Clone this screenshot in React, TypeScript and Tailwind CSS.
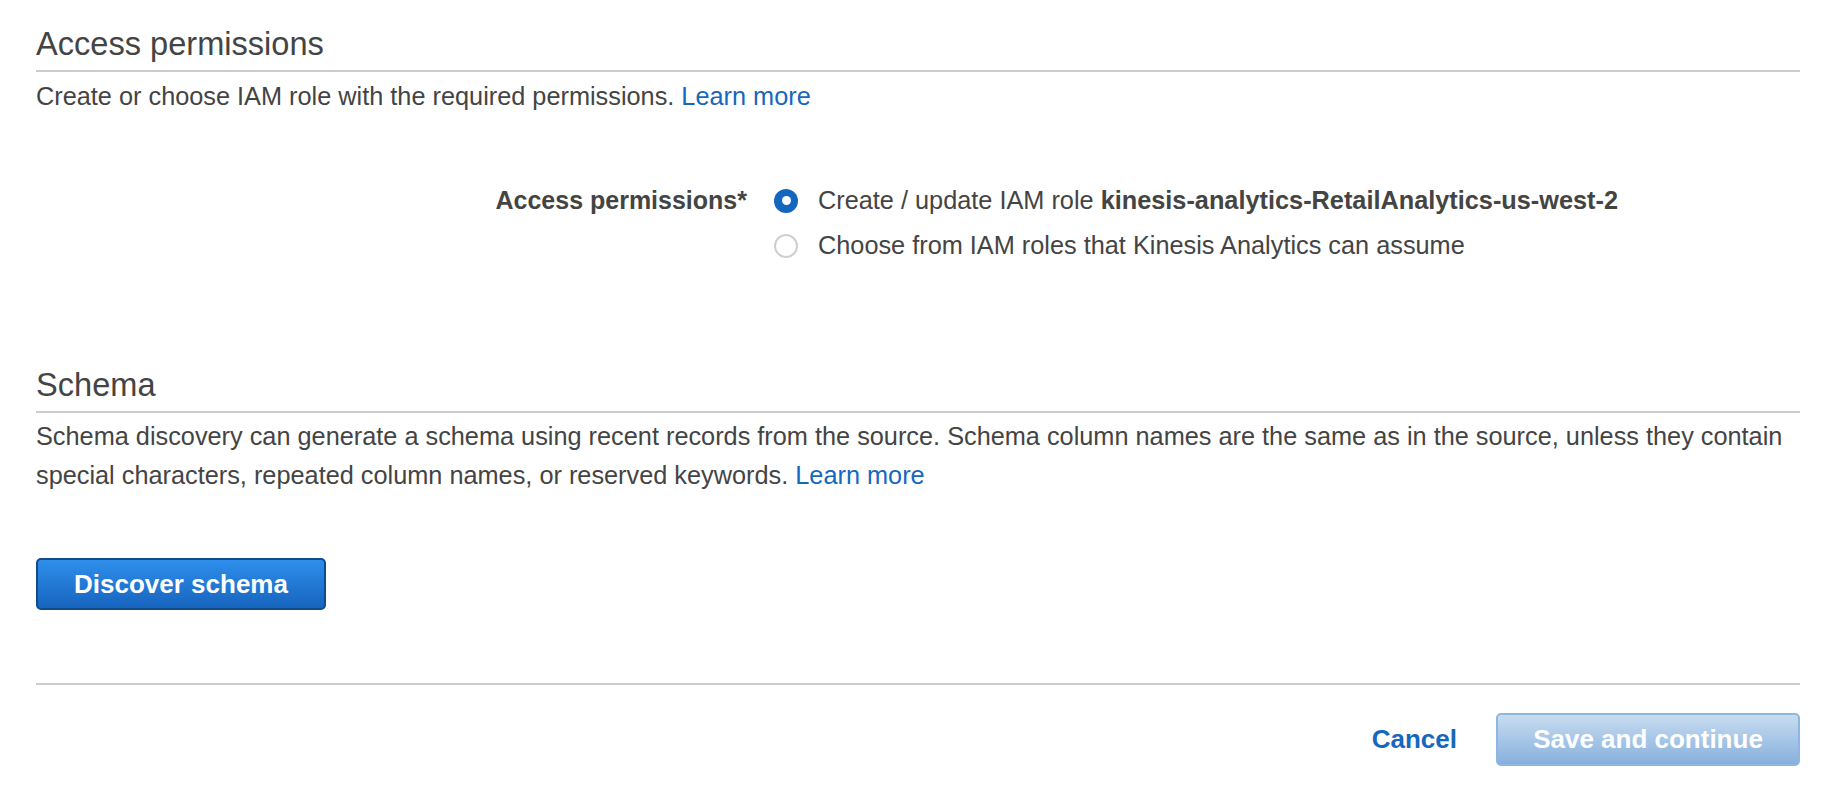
import React from "react";

function Radio({ checked }: { checked: boolean }) {
  return checked ? (
    <span className="flex h-[24px] w-[24px] shrink-0 items-center justify-center rounded-full bg-[#1466bf]">
      <span className="h-[9px] w-[9px] rounded-full bg-white" />
    </span>
  ) : (
    <span className="h-[24px] w-[24px] shrink-0 rounded-full border-2 border-[#cfcfcf] bg-white" />
  );
}

export default function App() {
  return (
    <div
      className="min-h-[788px] w-full bg-white pl-[36px] pr-[30px] text-[#444444]"
      style={{ fontFamily: '"Liberation Sans", Arial, Helvetica, sans-serif' }}
    >
      <section>
        <h2 className="border-b-2 border-[#cccccc] pt-[24px] pb-[6px] text-[32.6px] leading-[40px] font-normal text-[#444444]">
          Access permissions
        </h2>
        <p className="mt-[5px] text-[25.3px] leading-[39px]">
          Create or choose IAM role with the required permissions.{" "}
          <a className="text-[#1567c0]">Learn more</a>
        </p>
        <div className="mt-[62px] flex">
          <div className="w-[711px] shrink-0 pt-0 text-right text-[25px] font-bold leading-[45px]">
            Access permissions*
          </div>
          <div className="ml-[27px] flex flex-col text-[25.3px]">
            <label className="flex h-[45px] items-center gap-[20px]">
              <Radio checked />
              <span>
                Create / update IAM role{" "}
                <b className="font-bold">kinesis-analytics-RetailAnalytics-us-west-2</b>
              </span>
            </label>
            <label className="flex h-[45px] items-center gap-[20px]">
              <Radio checked={false} />
              <span>Choose from IAM roles that Kinesis Analytics can assume</span>
            </label>
          </div>
        </div>
      </section>

      <section className="mt-[97px]">
        <h2 className="border-b-2 border-[#cccccc] pb-[6px] text-[32.6px] leading-[40px] font-normal text-[#444444]">
          Schema
        </h2>
        <p className="mt-[4px] text-[25.3px] leading-[39px]">
          Schema discovery can generate a schema using recent records from the source. Schema
          column names are the same as in the source, unless they contain special characters,
          repeated column names, or reserved keywords.{" "}
          <a className="text-[#1567c0]">Learn more</a>
        </p>
        <button className="mt-[63px] flex h-[52px] w-[290px] items-center justify-center rounded-[5px] border-2 border-[#0f4c8c] bg-gradient-to-b from-[#2f8fec] to-[#1764be] text-[26px] font-bold text-white">
          Discover schema
        </button>
      </section>

      <div className="mt-[73px] border-t-2 border-[#cccccc]" />

      <div className="mt-[28px] flex items-center justify-end">
        <a className="text-[26px] font-bold text-[#1567c0]">Cancel</a>
        <button className="ml-[39px] flex h-[53px] w-[304px] items-center justify-center rounded-[5px] border-2 border-[#8fb6de] bg-gradient-to-b from-[#c8dcf1] to-[#86b0dc] text-[26px] font-bold text-white">
          Save and continue
        </button>
      </div>
    </div>
  );
}
